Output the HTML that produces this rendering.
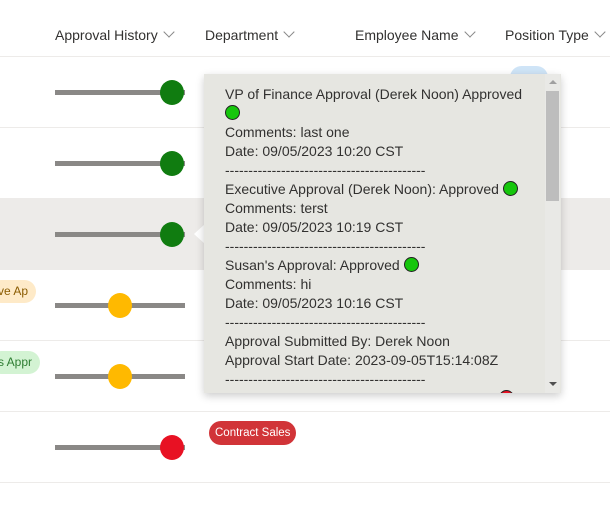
<!DOCTYPE html><html><head><style>
body{margin:0;width:610px;height:523px;overflow:hidden;background:#fff;font-family:"Liberation Sans",sans-serif;position:relative;color:#323130}
.h{position:absolute;top:27px;font-size:14px;color:#323130}
.h span{display:inline-block;width:7px;height:7px;border-right:1px solid #888;border-bottom:1px solid #888;transform:rotate(45deg);margin-left:7px;position:relative;top:-4px}
.row{position:absolute;left:0;width:610px;height:70px;border-bottom:1px solid #edebe9}
.ln{position:absolute;left:55px;width:130px;height:5px;background:#8a8886}
.dot{position:absolute;width:24px;height:25px;border-radius:50%}
.pill{position:absolute;height:23px;border-radius:12px;font-size:12px;line-height:23px;padding:0 8px}
.pop{position:absolute;left:204px;top:74px;width:357px;height:319px;background:#e6e6e1;box-shadow:0 3px 8px rgba(0,0,0,.2);overflow:hidden}
.tx{position:absolute;left:21px;top:11px;font-size:14px;line-height:19px;color:#323130;white-space:nowrap}
.g{display:inline-block;width:13px;height:13px;border-radius:50%;background:#16c60c;border:1px solid #222;vertical-align:-2px}
</style></head><body>
<div style="position:absolute;top:56px;left:0;width:610px;border-top:1px solid #edebe9"></div>
<div class="h" style="left:55px">Approval History<span></span></div>
<div class="h" style="left:205px">Department<span></span></div>
<div class="h" style="left:355px">Employee Name<span></span></div>
<div class="h" style="left:505px">Position Type<span></span></div>
<div class="row" style="top:57px"></div>
<div class="row" style="top:128px"></div>
<div class="row" style="top:199px;background:#edebe9"></div>
<div class="row" style="top:270px"></div>
<div class="row" style="top:341px"></div>
<div class="row" style="top:412px"></div>
<div class="ln" style="top:90px"></div><div class="dot" style="left:160px;top:80px;background:#107c10"></div>
<div class="ln" style="top:161px"></div><div class="dot" style="left:160px;top:151px;background:#107c10"></div>
<div class="ln" style="top:232px"></div><div class="dot" style="left:160px;top:222px;background:#107c10"></div>
<div class="ln" style="top:303px"></div><div class="dot" style="left:108px;top:293px;background:#ffb900"></div>
<div class="ln" style="top:374px"></div><div class="dot" style="left:108px;top:364px;background:#ffb900"></div>
<div class="ln" style="top:445px"></div><div class="dot" style="left:160px;top:435px;background:#e81123"></div>
<div class="pill" style="left:-10px;top:280px;background:#feeac8;color:#8a5b00">ve Ap</div>
<div class="pill" style="left:-10px;top:351px;background:#d3f3d3;color:#2e7d32">s Appr</div>
<div class="pill" style="left:510px;top:66px;width:22px;background:#cfe4f7"></div>
<div class="pill" style="left:209px;top:421px;background:#d13438;color:#fff;height:24px;line-height:24px;padding:0 6px;font-size:11.5px">Contract Sales</div>
<div style="position:absolute;left:194px;top:224px;width:0;height:0;border-top:10px solid transparent;border-bottom:10px solid transparent;border-right:11px solid #fff"></div>
<div class="pop">
<div class="tx">VP of Finance Approval (Derek Noon) Approved<br><span class="g"></span><br>Comments: last one<br>Date: 09/05/2023 10:20 CST<br>-------------------------------------------<br>Executive Approval (Derek Noon): Approved <span class="g"></span><br>Comments: terst<br>Date: 09/05/2023 10:19 CST<br>-------------------------------------------<br>Susan's Approval: Approved <span class="g"></span><br>Comments: hi<br>Date: 09/05/2023 10:16 CST<br>-------------------------------------------<br>Approval Submitted By: Derek Noon<br>Approval Start Date: 2023-09-05T15:14:08Z<br>-------------------------------------------<br>Executive Approval (Derek Noon): Rejected <span class="g" style="background:#e81123"></span></div>
<div style="position:absolute;left:341px;top:0;width:15px;height:319px;background:#e9e9e6"></div>
<div style="position:absolute;left:342px;top:17px;width:13px;height:110px;background:#bdbdbd"></div>
<div style="position:absolute;left:345px;top:6px;border-left:4px solid transparent;border-right:4px solid transparent;border-bottom:4px solid #a0a0a0"></div>
<div style="position:absolute;left:345px;top:308px;border-left:4px solid transparent;border-right:4px solid transparent;border-top:4px solid #505050"></div>
</div>
</body></html>
